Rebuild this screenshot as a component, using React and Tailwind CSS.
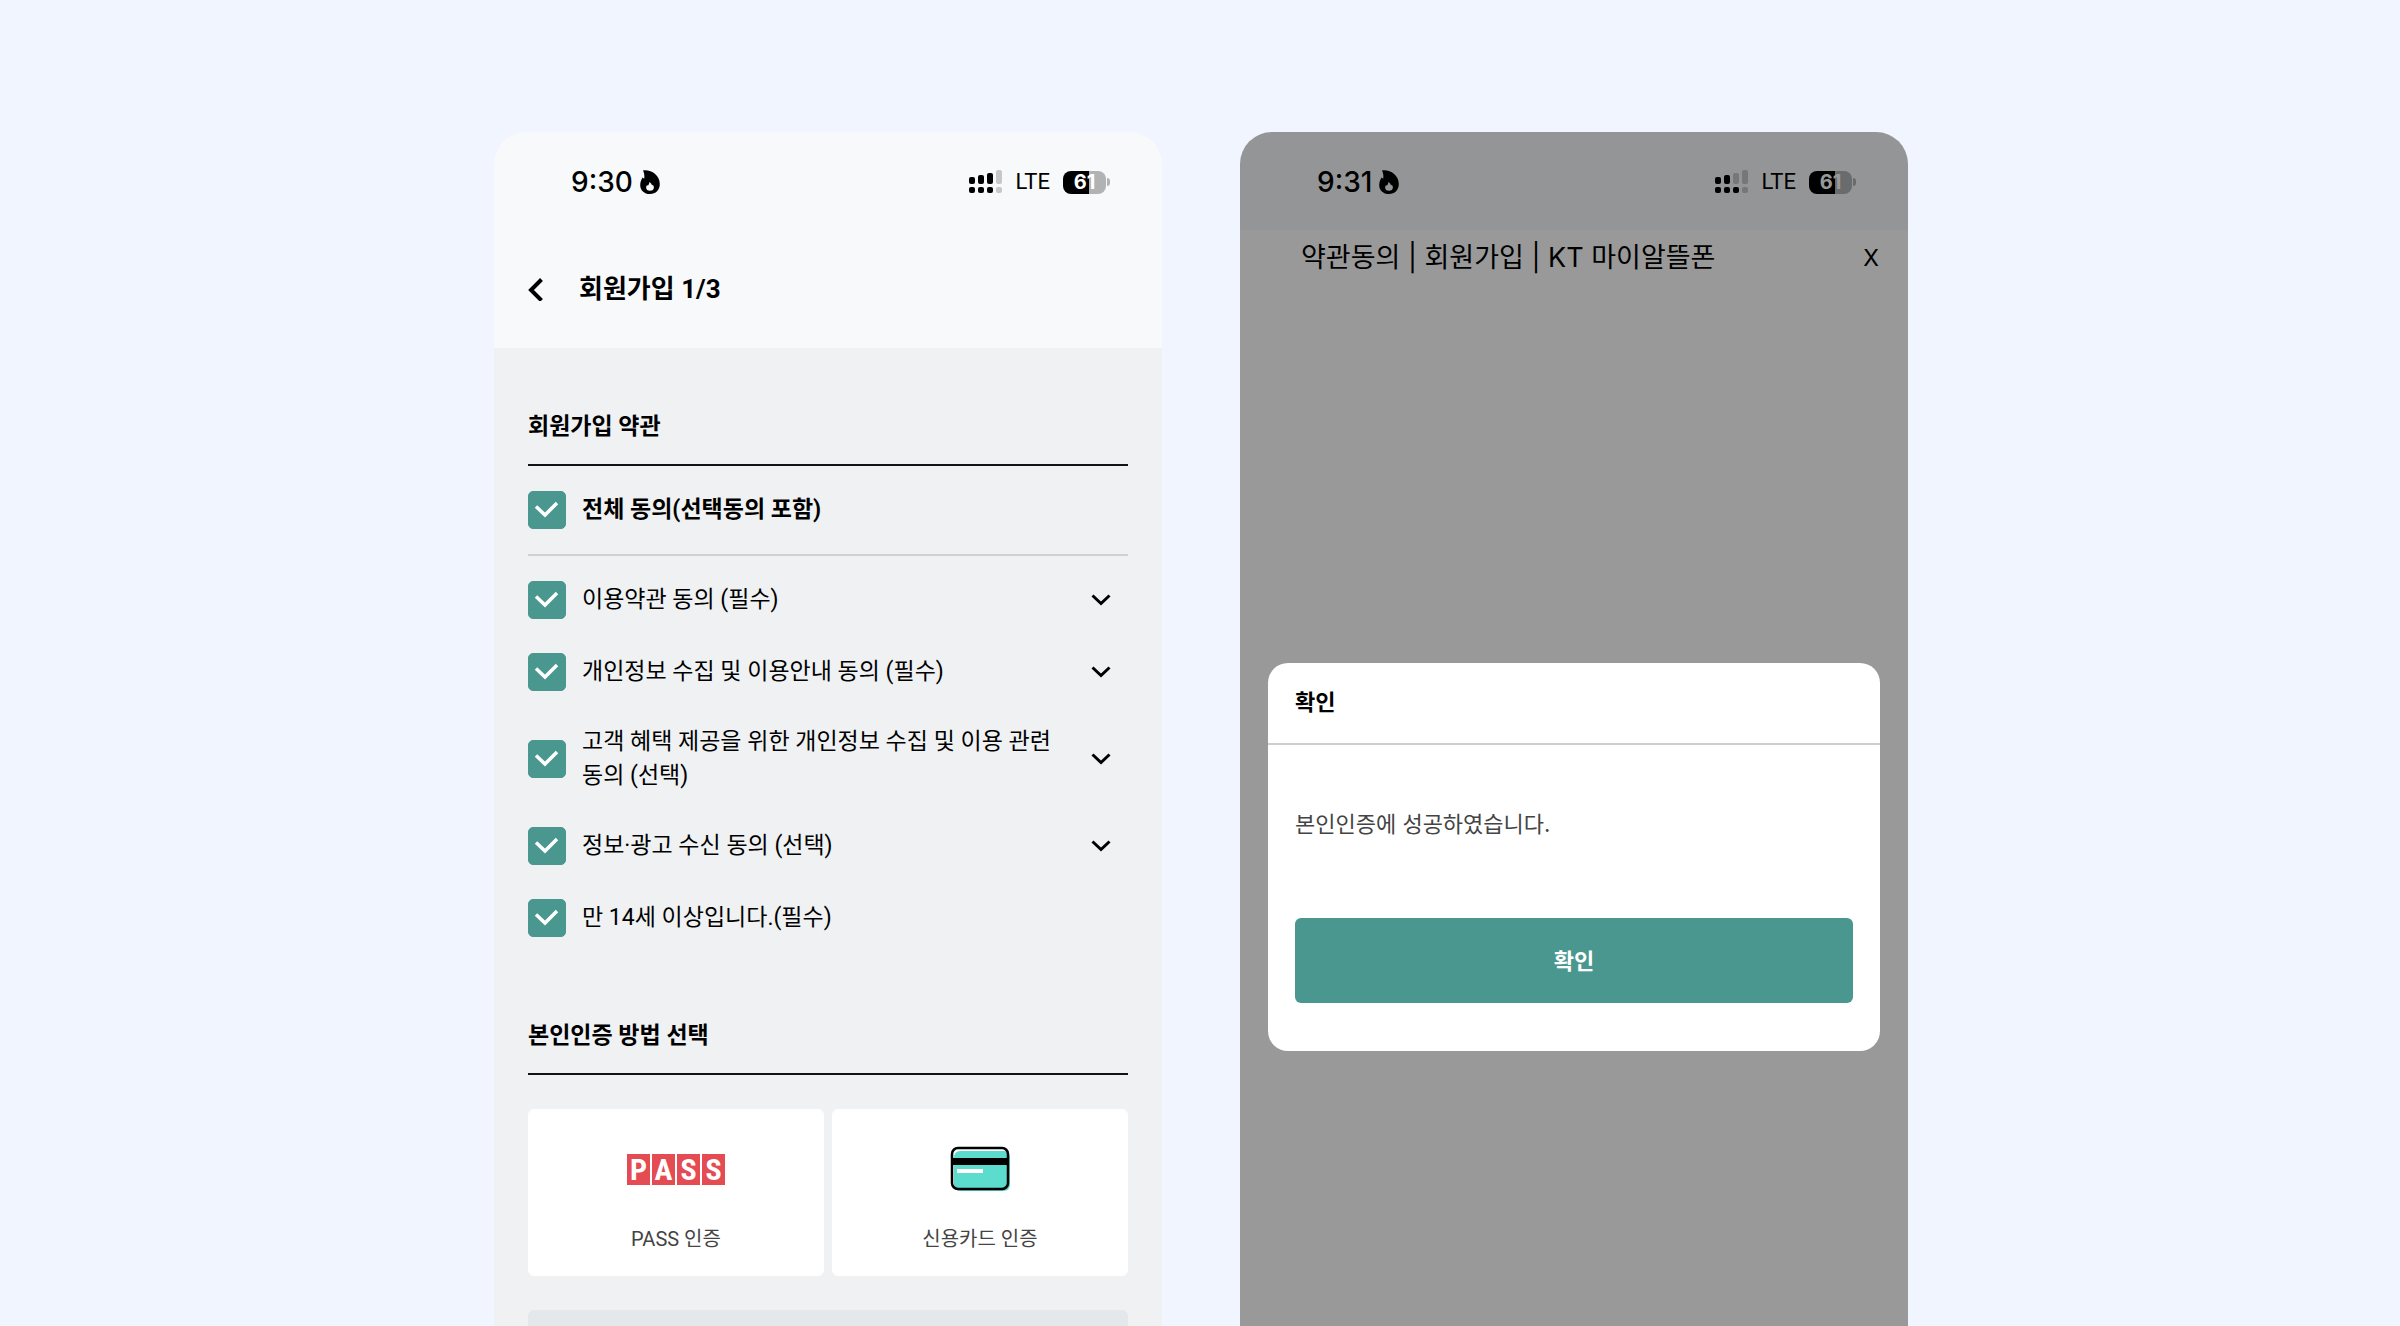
import { useState } from "react";

const terms = [
  { id: "use", label: "이용약관 동의 (필수)", detail: true },
  { id: "privacy", label: "개인정보 수집 및 이용안내 동의 (필수)", detail: true },
  {
    id: "benefit",
    label: "고객 혜택 제공을 위한 개인정보 수집 및 이용 관련 동의 (선택)",
    detail: true,
  },
  { id: "ads", label: "정보·광고 수신 동의 (선택)", detail: true },
  { id: "age", label: "만 14세 이상입니다.(필수)", detail: false },
];

function FlameIcon() {
  return (
    <svg viewBox="0 0 20 24" className="w-5 h-6" aria-hidden="true">
      <path
        fillRule="evenodd"
        d="M3 .4C10.500-.8 19.800 4.500 19.800 14 19.800 20 15.800 24 10 24S.2 20.200.2 15.200C.2 12 1.200 9.600 2.600 7.500l1.600 1.300C4.600 6 4.400 3 3 .4zM9.200 12c.2 1.800-.5 2.800-1.300 3.700l-.8-.8c-.6.9-1 1.700-1 2.600 0 2 1.600 3.300 3.900 3.300s3.900-1.300 3.900-3.300c0-1.100-.4-2-1.100-2.800l-.8.8c-.2-1.500-1.200-2.700-2.800-3.500z"
      />
    </svg>
  );
}

function SignalIcon({ bars }) {
  const tops = [7, 5, 3, 0];
  return (
    <svg viewBox="0 0 33 24" className="w-[33px] h-6" aria-hidden="true">
      {tops.map((top, i) => (
        <g key={top}>
          <rect
            x={i * 9}
            y={top}
            width="6"
            height={14 - top}
            rx="2"
            fill={i < bars ? "#000" : "#c6c7c9"}
          />
          <rect x={i * 9} y="17" width="6" height="6" rx="2" fill={i < 3 ? "#000" : "#c6c7c9"} />
        </g>
      ))}
    </svg>
  );
}

function Battery() {
  return (
    <div className="flex items-center gap-px">
      <div className="w-[43px] h-[23px] rounded-[8px] bg-linear-to-r from-black from-60% to-[#b1b2b4] to-60% text-white text-[20px] leading-[23px] font-bold text-center">
        61
      </div>
      <span className="w-[3px] h-2 rounded-r-full bg-[#b1b2b4]" />
    </div>
  );
}

function StatusBar({ time, bars }) {
  return (
    <div className="h-[98px] pt-0.5 pl-[77px] pr-[52px] flex items-center justify-between font-['Inter',sans-serif] bg-[#f7f9fa]">
      <div className="flex items-center gap-[7px]">
        <span className="text-[28px] leading-8 font-medium">{time}</span>
        <FlameIcon />
      </div>
      <div className="flex items-center gap-[13px]">
        <SignalIcon bars={bars} />
        <span className="text-[22px] leading-6 font-['Roboto',sans-serif]">LTE</span>
        <Battery />
      </div>
    </div>
  );
}

function CheckBox({ id, checked, onChange }) {
  return (
    <span className="grid shrink-0">
      <input
        id={id}
        type="checkbox"
        checked={checked}
        onChange={onChange}
        className="peer col-start-1 row-start-1 appearance-none size-[38px] rounded-[5px] border border-[#4a9790] bg-white checked:bg-[#4a9790]"
      />
      <svg
        viewBox="0 0 38 38"
        className="col-start-1 row-start-1 size-[38px] pointer-events-none hidden peer-checked:block"
        fill="none"
        stroke="#fff"
        strokeWidth="3.500"
        aria-hidden="true"
      >
        <path d="M8 15.500l9 8.500L29 12" />
      </svg>
    </span>
  );
}

function SectionTitle({ children }) {
  return (
    <h2 className="pt-px pb-[19px] border-b-2 border-[#131217] text-[23px] leading-9 font-bold">
      {children}
    </h2>
  );
}

function PassLogo() {
  return (
    <div className="flex gap-0.5" aria-label="PASS">
      {["P", "A", "S", "S"].map((c, i) => (
        <span
          key={i}
          className="w-[23px] h-[31px] bg-[#e54b52] text-white text-[30px] leading-[31px] font-bold text-center font-['Roboto_Condensed','Liberation_Sans_Narrow','Roboto',sans-serif]"
        >
          {c}
        </span>
      ))}
    </div>
  );
}

function CardIcon() {
  return (
    <svg viewBox="0 0 60 46" className="w-[60px] h-[46px]" aria-hidden="true">
      <rect x="4" y="5" width="56" height="40" rx="6" fill="#5cdccc" />
      <rect x="2" y="2" width="56" height="41" rx="6" fill="none" stroke="#000" strokeWidth="2.500" />
      <rect x="2" y="12" width="56" height="7" />
      <rect x="7" y="23" width="26" height="4" fill="#fff" />
    </svg>
  );
}

function MethodButton({ icon, label }) {
  return (
    <button
      type="button"
      className="pt-[37px] pb-[23px] flex flex-col items-center gap-[33px] rounded-md bg-white"
    >
      <span className="h-[46px] flex items-center">{icon}</span>
      <span className="text-[20px] leading-7 text-[#444]">{label}</span>
    </button>
  );
}

function SignUp() {
  const [agreed, setAgreed] = useState(terms.map((t) => t.id));
  const all = agreed.length === terms.length;

  const toggle = (id) =>
    setAgreed(agreed.includes(id) ? agreed.filter((a) => a !== id) : [...agreed, id]);

  return (
    <section className="flex-1 min-h-[1450px] rounded-[32px] overflow-hidden bg-[#eff1f3]">
      <StatusBar time="9:30" bars={3} />
      <header className="h-[118px] px-[33px] flex items-center gap-9 bg-[#f7f9fa]">
        <button type="button" aria-label="뒤로">
          <svg
            viewBox="0 0 16 24"
            className="w-4 h-6"
            fill="none"
            stroke="#000"
            strokeWidth="4"
            aria-hidden="true"
          >
            <path d="M14.500 2.500L4 13l10.500 10.500" />
          </svg>
        </button>
        <h1 className="text-[26px] leading-9 font-bold">회원가입 1/3</h1>
      </header>

      <div className="px-[34px] pt-[60px]">
        <SectionTitle>회원가입 약관</SectionTitle>
        <div className="py-[25px] flex items-center gap-4 border-b-2 border-[#cfd1d3]">
          <CheckBox
            id="all"
            checked={all}
            onChange={() => setAgreed(all ? [] : terms.map((t) => t.id))}
          />
          <label htmlFor="all" className="text-[23px] leading-[34px] font-bold">
            전체 동의(선택동의 포함)
          </label>
        </div>

        <ul className="pt-[25px] flex flex-col gap-[34px]">
          {terms.map((t) => (
            <li key={t.id} className="min-h-[38px] pr-[17px] flex items-center">
              <CheckBox id={t.id} checked={agreed.includes(t.id)} onChange={() => toggle(t.id)} />
              <label
                htmlFor={t.id}
                className="flex-1 pl-4 pr-8 text-[23px] leading-[34px] break-keep"
              >
                {t.label}
              </label>
              {t.detail && (
                <button type="button" aria-label="내용 보기">
                  <svg
                    viewBox="0 0 20 12"
                    className="w-5 h-3"
                    fill="none"
                    stroke="#000"
                    strokeWidth="3"
                    aria-hidden="true"
                  >
                    <path d="M1.500 1.500L10 9.500l8.500-8" />
                  </svg>
                </button>
              )}
            </li>
          ))}
        </ul>

        <div className="pt-20">
          <SectionTitle>본인인증 방법 선택</SectionTitle>
        </div>
        <div className="pt-[34px] grid grid-cols-2 gap-2">
          <MethodButton icon={<PassLogo />} label="PASS 인증" />
          <MethodButton icon={<CardIcon />} label="신용카드 인증" />
        </div>
        <div className="mt-[34px] h-24 rounded-md bg-[#e4e8ea]" />
      </div>
    </section>
  );
}

function Verified() {
  return (
    <section className="relative flex-1 min-h-[1450px] rounded-[32px] overflow-hidden bg-white font-['Inter','Noto_Sans_CJK_KR',sans-serif]">
      <StatusBar time="9:31" bars={2} />
      <header className="h-14 pl-[61px] pr-[29px] flex items-center justify-between">
        <h1 className="text-[27px] leading-9">약관동의 | 회원가입 | KT 마이알뜰폰</h1>
        <button type="button" className="text-[23px] leading-9">
          X
        </button>
      </header>

      {/* dimmed layer with the confirm dialog */}
      <div className="absolute inset-0 px-7 flex items-center bg-black/40">
        <div role="dialog" aria-labelledby="confirm" className="w-full rounded-[20px] bg-white">
          <h2
            id="confirm"
            className="px-[27px] pt-[21px] pb-[23px] border-b-2 border-[#cecece] text-[22px] leading-9 font-bold"
          >
            확인
          </h2>
          <div className="px-[27px] pt-[61px] pb-12">
            <p className="text-[22px] leading-9 text-[#444]">본인인증에 성공하였습니다.</p>
            <button
              type="button"
              className="mt-[76px] w-full h-[85px] rounded-md bg-[#4a9790] text-white text-[22px] leading-9 font-bold"
            >
              확인
            </button>
          </div>
        </div>
      </div>
    </section>
  );
}

export default function App() {
  return (
    <main className="h-screen overflow-hidden pt-[132px] bg-[#f0f5ff] text-black font-['Roboto','Noto_Sans_CJK_KR',sans-serif]">
      <div className="max-w-[1416px] mx-auto pl-0.5 flex items-start gap-[78px]">
        <SignUp />
        <Verified />
      </div>
    </main>
  );
}
